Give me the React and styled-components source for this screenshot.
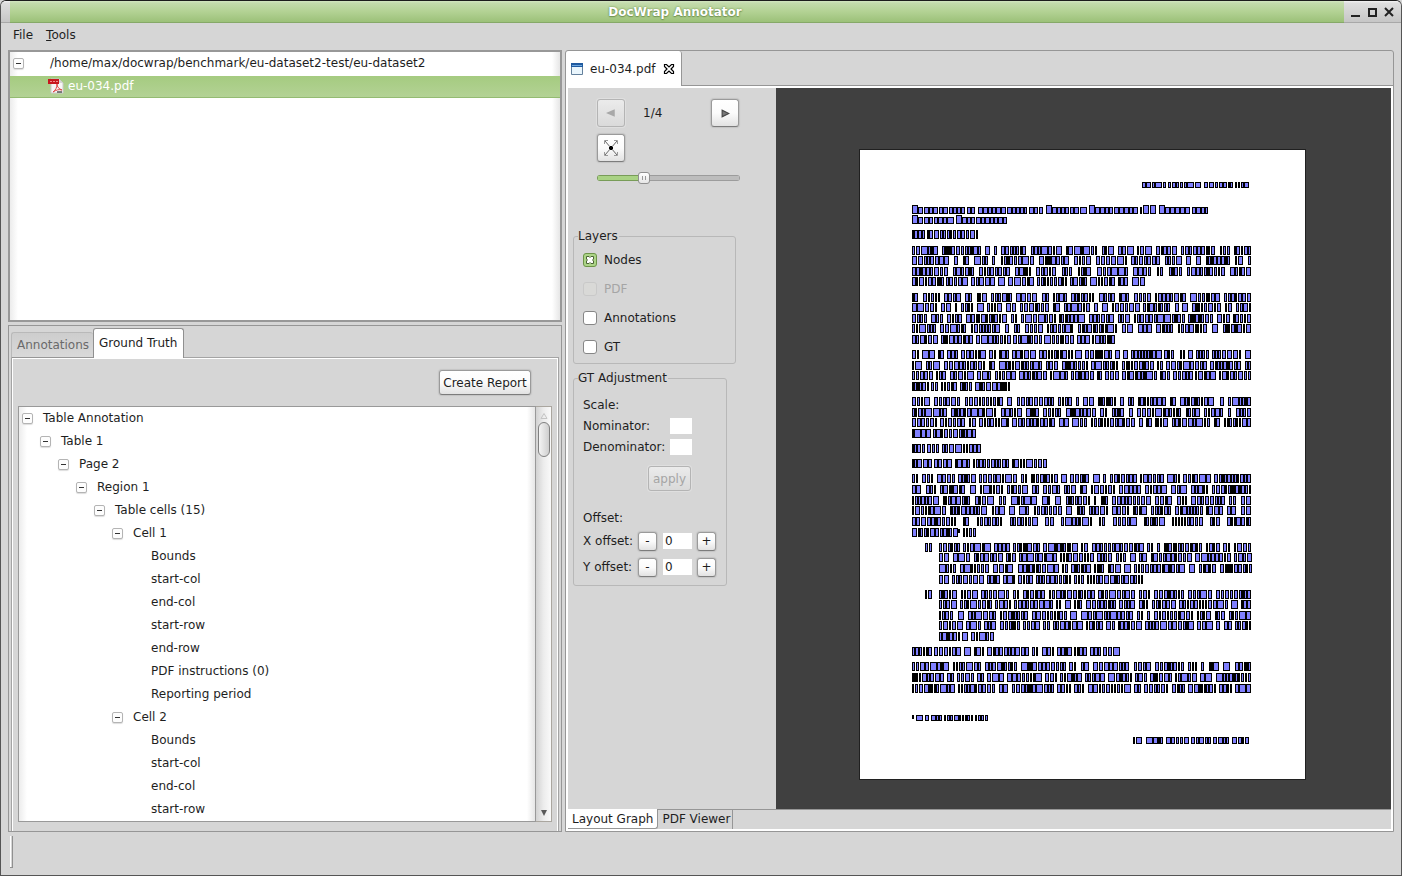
import React, { useState } from "react";
import styled, { createGlobalStyle, css } from "styled-components";

const GlobalStyle = createGlobalStyle`
  * { box-sizing: border-box; }
  body { margin: 0; background: #d6d6d6; }
  body, button, input {
    font-family: "DejaVu Sans", Verdana, sans-serif;
    font-size: 12px;
    color: #1e1e1e;
  }
  button { padding: 0; }
`;

const Window = styled.div`
  display: flex;
  flex-direction: column;
  height: 100vh;
  min-height: 700px;
  border: 1px solid #555;
  border-top-color: #1c1c1c;
  border-radius: 6px 6px 0 0;
  background: #d6d6d6;
`;

const TitleBar = styled.header`
  display: flex;
  height: 22px;
  flex: none;
  padding-left: 9px;
  border-radius: 5px 5px 0 0;
  border-bottom: 1px solid #a8a8a8;
  background: linear-gradient(#f4f4f4, #dedede 10%, #c6c6c6);
`;

const Title = styled.h1`
  flex: 1;
  margin: 0 0 -1px;
  padding-right: 4px;
  border-bottom: 1px solid #86a968;
  background: linear-gradient(#d3e6c1, #c3dbac 10%, #b3d294 50%, #9cc179);
  color: #fff;
  font-size: 12px;
  line-height: 22px;
  text-align: center;
  text-shadow: 0 0 2px #5c7d3d, 0 1px 1px #7c9d5d;
`;

const WindowButtons = styled.div`
  display: flex;
  align-items: center;
  gap: 5px;
  width: 57px;
  padding-left: 5px;
`;

const WindowButton = styled.button`
  display: flex;
  width: 12px;
  height: 14px;
  border: 0;
  background: none;
`;

const MenuBar = styled.nav`
  display: flex;
  flex: none;
  gap: 13px;
  height: 27px;
  padding: 0 12px;
`;

const MenuButton = styled.button`
  border: 0;
  background: none;
  line-height: 22px;
  padding-bottom: 4px;
`;

const Main = styled.main`
  display: grid;
  flex: 1;
  grid-template-columns: minmax(0, 554fr) minmax(0, 829fr);
  gap: 3px;
  min-height: 0;
  padding: 0 7px;
`;

const LeftColumn = styled.div`
  display: flex;
  flex-direction: column;
  gap: 3px;
  min-height: 0;
`;

const edgeShade = css`
  background: linear-gradient(90deg, #ececec, #fff 8px, #fff calc(100% - 8px), #e6e6e6);
`;

const FileTree = styled.ul`
  flex: 268 1 0;
  margin: 0;
  padding: 0;
  overflow: hidden;
  list-style: none;
  border: 2px solid #989898;
  ${edgeShade}
`;

const FileRow = styled.li`
  display: flex;
  align-items: center;
  height: 23px;
  padding: 0 0 1px ${(p) => (p.$selected ? 38 : 3)}px;
  gap: ${(p) => (p.$selected ? 4 : 26)}px;
  white-space: nowrap;
  ${(p) =>
    p.$selected &&
    css`
      height: 22px;
      margin-top: 1px;
      color: #fff;
      border-bottom: 1px solid #94bb72;
      background: linear-gradient(#a5cb80, #b3d295);
    `}
`;

const Expander = styled.button`
  display: flex;
  align-items: center;
  justify-content: center;
  flex: none;
  width: 11px;
  height: 11px;
  border: 1px solid #b4b4b4;
  border-radius: 2px;
  background: #fdfdfd;
  box-shadow: 0 1px 1px #ddd;
  &::before {
    content: "";
    width: 5px;
    height: 1px;
    background: #333;
  }
`;

const LowerPanel = styled.section`
  display: flex;
  flex-direction: column;
  flex: 503 1 0;
  min-height: 0;
  padding: 2px 2px 0;
  border: 1px solid #969696;
`;

const LowerTabs = styled.div`
  display: flex;
  align-items: flex-end;
  flex: none;
  height: 30px;
  position: relative;
  z-index: 1;
  margin-bottom: -1px;
`;

const LowerTab = styled.button`
  height: ${(p) => (p.$active ? 30 : 26)}px;
  padding: ${(p) => (p.$active ? "0 6px 2px 5px" : "0 4px 0 5px")};
  border: 1px solid ${(p) => (p.$active ? "#909090" : "#b9b9b9")};
  border-right-width: ${(p) => (p.$active ? 1 : 0)}px;
  border-bottom: ${(p) => (p.$active ? "0" : "1px solid #969696")};
  border-radius: 3px 3px 0 0;
  background: ${(p) => (p.$active ? "#fff" : "linear-gradient(#cdcdcd, #d9d9d9)")};
  color: ${(p) => (p.$active ? "#1e1e1e" : "#6a6a6a")};
`;

const LowerContent = styled.div`
  display: flex;
  flex-direction: column;
  flex: 1;
  min-height: 0;
  padding: 11px 6px 9px;
  border: 1px solid #a4a4a4;
  border-bottom: 0;
  box-shadow: inset 1px 1px 0 #fff, inset -1px 0 0 #fff;
`;

const Actions = styled.div`
  display: flex;
  flex: none;
  justify-content: flex-end;
  padding: 1px 21px 11px 0;
`;

const Button = styled.button`
  display: flex;
  align-items: center;
  justify-content: center;
  flex: none;
  width: ${(p) => p.$w}px;
  height: ${(p) => p.$h}px;
  border: 1px solid #9a9a9a;
  border-bottom-color: #7c7c7c;
  border-radius: 3px;
  background: linear-gradient(#fff, #fbfbfb 50%, #e2e2e2);
  box-shadow: 0 0 1px 1px #c4c4c4;
  white-space: nowrap;
  &:disabled {
    color: #a5a5a5;
    border-color: #b4b4b4;
    background: linear-gradient(#ebebeb, #dadada);
    box-shadow: 0 0 0 1px #dfdfdf;
  }
`;

const TreeFrame = styled.div`
  display: flex;
  flex: 1;
  min-height: 0;
`;

const AnnotationTree = styled.ul`
  flex: 1;
  min-width: 0;
  margin: 0;
  padding: 0;
  overflow: hidden;
  list-style: none;
  border: 1px solid #999;
  ${edgeShade}
`;

const TreeRow = styled.li`
  display: flex;
  align-items: center;
  gap: 10px;
  height: 23px;
  padding: 0 0 1px ${(p) => 3 + p.$level * 18 + (p.$leaf ? 3 : 0)}px;
  white-space: nowrap;
`;

const ScrollBar = styled.div`
  display: flex;
  flex-direction: column;
  align-items: center;
  width: 16px;
  padding: 5px 1px 4px;
  border: 1px solid #aaa69f;
  border-left: 0;
  background: linear-gradient(90deg, #d2d2d2, #ececec 50%, #fafafa);
`;

const ScrollThumb = styled.div`
  width: 12px;
  height: 35px;
  margin: 2px 0 auto;
  border: 1px solid #808080;
  border-radius: 6px;
  background: linear-gradient(90deg, #f4f4f4, #cecece);
`;

const Editor = styled.section`
  display: flex;
  flex-direction: column;
  min-height: 0;
  border: 1px solid #969696;
  border-radius: 3px 3px 0 0;
`;

const EditorTabs = styled.div`
  display: flex;
  flex: none;
  height: 35px;
  border-bottom: 1px solid #969696;
`;

const EditorTab = styled.div`
  display: flex;
  align-items: center;
  gap: 7px;
  margin-bottom: -1px;
  padding: 0 6px 0 5px;
  border-right: 1px solid #969696;
  border-radius: 3px 3px 0 0;
  background: #fff;
`;

const BareButton = styled.button`
  display: flex;
  border: 0;
  background: none;
`;

const EditorBody = styled.div`
  display: flex;
  flex-direction: column;
  flex: 1;
  min-height: 0;
  border: 2px solid #fff;
`;

const Workspace = styled.div`
  display: flex;
  flex: 1;
  min-height: 0;
`;

const Controls = styled.aside`
  flex: none;
  width: 208px;
  padding: 11px 0 0 5px;
`;

const PageControls = styled.div`
  display: flex;
  flex-direction: column;
  gap: 7px;
  width: 166px;
  height: 130px;
  padding-left: 24px;
`;

const PageNav = styled.div`
  display: flex;
  align-items: center;
`;

const PageCount = styled.output`
  flex: 1;
  padding-left: 18px;
`;

const ZoomSlider = styled.input`
  appearance: none;
  width: 143px;
  height: 12px;
  margin: 3px 0 0;
  background: none;
  &::-webkit-slider-runnable-track {
    height: 6px;
    border-radius: 3px;
    background:
      linear-gradient(90deg, #a9d284 32%, #bdbdbd 32%) 1px 1px / 141px 4px no-repeat,
      linear-gradient(90deg, #789c58 32%, #9c9c9c 32%);
  }
  &::-webkit-slider-thumb {
    appearance: none;
    width: 12px;
    height: 12px;
    margin-top: -3px;
    border: 1px solid #909090;
    border-radius: 3px;
    background:
      linear-gradient(#999, #999) 3px 3px / 1px 4px no-repeat,
      linear-gradient(#999, #999) 6px 3px / 1px 4px no-repeat,
      linear-gradient(#fff, #e6e6e6);
  }
`;

const Group = styled.fieldset`
  width: ${(p) => p.$w}px;
  margin: 0 0 7px;
  padding: 2px 9px ${(p) => p.$bottom}px;
  border: 1px solid #b8b8b8;
  border-radius: 3px;
`;

const Legend = styled.legend`
  margin-left: -5px;
  padding: 0 1px 0 0;
  line-height: 14px;
`;

const CheckRow = styled.label`
  display: flex;
  align-items: center;
  gap: 7px;
  height: 29px;
  color: ${(p) => (p.$disabled ? "#a5a5a5" : "#1e1e1e")};
`;

const CheckHolder = styled.span`
  position: relative;
  display: flex;
`;

const CheckInput = styled.input`
  appearance: none;
  width: 14px;
  height: 14px;
  margin: 0;
  border: 1px solid #868686;
  border-radius: 3px;
  background: #fff;
  &:checked {
    border-color: #6d9448;
    background: #acd487;
  }
  &:disabled {
    border-color: #c9c9c9;
    background: #d9d9d7;
  }
`;

const CheckMark = styled.svg`
  position: absolute;
  inset: 0;
  pointer-events: none;
`;

const GroupCaption = styled.div`
  line-height: 20px;
  margin-top: ${(p) => p.$top}px;
`;

const ScaleRow = styled.div`
  display: flex;
  align-items: center;
  justify-content: space-between;
  width: 109px;
  height: 21px;
`;

const OffsetRow = styled.div`
  display: grid;
  grid-template-columns: 50px 20px 29px 20px;
  column-gap: 5px;
  align-items: center;
  height: 26px;
  & > label { white-space: nowrap; }
`;

const TextField = styled.input`
  width: ${(p) => p.$w}px;
  height: 16px;
  padding: 0 2px;
  border: 0;
  background: #fff;
`;

const ApplyRow = styled.div`
  display: flex;
  justify-content: flex-end;
  width: 109px;
  padding: 9px 1px 0 0;
`;

const Canvas = styled.div`
  display: flex;
  flex: 1;
  justify-content: center;
  align-items: flex-start;
  min-width: 0;
  overflow: hidden;
  padding: 61px 2px 0 0;
  background: #404040;
`;

const Page = styled.svg`
  flex: none;
  box-sizing: content-box;
  border: 1px solid #202020;
  background: #fff;
`;

const BottomTabs = styled.div`
  display: flex;
  flex: none;
  height: 20px;
  border-top: 1px solid #969696;
`;

const BottomTab = styled.button`
  margin-top: ${(p) => (p.$active ? -1 : 0)}px;
  padding: ${(p) => (p.$active ? "0 4px 0 4px" : "0 2px 1px 4px")};
  border: 0;
  border-right: 1px solid #969696;
  border-bottom: ${(p) => (p.$active ? "1px solid #969696" : "0")};
  border-radius: 0 0 ${(p) => (p.$active ? 3 : 0)}px 0;
  background: ${(p) => (p.$active ? "#fff" : "none")};
`;

const StatusBar = styled.footer`
  flex: none;
  height: 43px;
  padding: 4px 9px;
`;

const Grip = styled.div`
  width: 3px;
  height: 32px;
  border: solid #909090;
  border-width: 0 1px 1px 0;
  box-shadow: inset 1px 0 0 #fff;
`;

const annotationRows = [
  [0, "Table Annotation"],
  [1, "Table 1"],
  [2, "Page 2"],
  [3, "Region 1"],
  [4, "Table cells (15)"],
  [5, "Cell 1"],
  [7, "Bounds"],
  [7, "start-col"],
  [7, "end-col"],
  [7, "start-row"],
  [7, "end-row"],
  [7, "PDF instructions (0)"],
  [7, "Reporting period"],
  [5, "Cell 2"],
  [7, "Bounds"],
  [7, "start-col"],
  [7, "end-col"],
  [7, "start-row"],
];

/* Text lines of the document: top, height and word extents, in thirds of a pixel. */
const pageLines = [
  [126, 18, "876-948 954-1053 1062-1092 1095-1149 1155-1161 1164-1197"],
  [201, 21, "C186-345 351-375 384-531 537-579 C588-711 C717-864 870-876 C879-897 C900-921 C927-1020 1026-1074"],
  [231, 21, "C186-312 C318-471"],
  [270, 27, "186-225 231-384"],
  [318, 27, "186-264 276-393 405-420 432-441 453-528 543-636 648-741 756-792 804-852 861-906 918-981 993-1095 1110-1140 1152-1203"],
  [348, 27, "186-297 312-324 339-357 372-414 426-435 453-552 567-657 672-723 738-831 843-930 945-996 1008-1023 1038-1053 1068-1140 1155-1179 1194-1203"],
  [381, 27, "186-294 309-372 387-480 495-543 558-618 636-666 684-723 741-834 849-903 921-939 957-996 1011-1125 1140-1203"],
  [411, 27, "186-282 288-354 363-435 444-465 474-552 561-651 660-711 720-795 804-834 846-885"],
  [459, 27, "186-204 219-270 282-333 345-366 381-411 423-486 498-561 576-597 609-651 663-732 747-795 807-837 852-903 915-1008 1020-1110 1122-1203"],
  [489, 27, "186-261 273-303 315-321 333-369 381-402 411-456 468-498 510-597 609-630 642-720 732-744 756-774 786-870 879-960 975-987 996-1014 1026-1113 1125-1146 1158-1203"],
  [522, 27, "186-231 243-279 291-336 348-471 483-501 513-618 627-705 717-792 804-840 852-1005 1014-1089 1101-1140 1149-1203"],
  [552, 27, "186-258 270-348 363-450 465-477 492-510 525-579 591-669 684-801 816-849 864-906 918-969 984-1071 1086-1104 1119-1203"],
  [585, 27, "186-264 273-369 378-483 489-576 582-672 681-720 726-795"],
  [630, 27, "186-207 216-255 264-282 291-324 333-408 417-438 447-477 486-558 567-669 675-696 705-786 795-810 819-834 843-936 942-972 990-1005 1014-1029 1038-1077 1086-1173 1185-1203"],
  [663, 27, "186-216 228-270 282-405 417-435 447-576 588-624 636-714 723-804 816-912 921-939 948-1071 1080-1173 1185-1203"],
  [693, 27, "186-249 258-288 300-372 381-423 435-498 507-591 600-654 663-732 741-756 765-807 816-921 930-960 969-1029 1035-1098 1107-1203"],
  [726, 27, "186-237 243-264 273-321 330-366 375-480"],
  [771, 27, "186-240 252-330 345-459 471-486 501-612 624-666 678-687 699-732 744-798 810-822 834-852 864-948 960-978 990-1098 1110-1122 1134-1203"],
  [804, 27, "186-291 303-438 453-516 528-567 579-633 648-738 750-771 786-822 837-849 861-993 1008-1050 1062-1119 1134-1143 1158-1203"],
  [834, 27, "186-261 270-345 357-378 387-477 486-615 627-657 666-711 723-855 867-879 888-906 915-954 966-1080 1092-1110 1122-1203"],
  [867, 27, "186-243 249-378"],
  [912, 27, "186-225 231-267 276-393"],
  [957, 27, "186-246 252-306 315-360 369-477 486-591"],
  [1002, 27, "186-204 216-249 261-315 324-378 387-501 513-531 543-624 633-651 660-717 729-750 759-768 780-861 870-942 951-990 999-1083 1092-1203"],
  [1035, 27, "186-213 228-258 270-345 360-378 390-459 471-534 546-567 579-630 642-678 690-711 723-795 807-873 885-951 963-1011 1023-1074 1086-1203"],
  [1068, 27, "186-267 279-360 375-432 447-468 483-561 576-600 615-633 648-720 732-738 753-774 786-903 915-966 981-1011 1023-1125 1137-1158 1173-1203"],
  [1098, 27, "186-288 300-411 426-465 477-495 507-537 552-636 648-666 681-705 717-774 786-837 849-891 903-963 975-1059 1068-1119 1131-1158 1173-1203"],
  [1131, 27, "186-318 339-357 381-456 480-564 585-612 633-726 747-765 789-861 882-945 966-1059 1080-1110 1131-1203"],
  [1164, 27, "186-324 339-378"],
  [1167, 12, "324-330"],
  [1209, 27, "225-246 267-330 339-423 432-480 489-570 579-684 693-714 726-882 891-909 921-930 942-1056 1068-1110 1119-1140 1152-1203"],
  [1239, 27, "267-297 309-360 372-459 468-498 507-621 630-732 741-786 798-828 840-858 867-891 903-1026 1035-1143 1152-1206"],
  [1272, 27, "267-318 330-417 429-495 504-627 636-654 663-723 732-762 774-813 822-843 852-1005 1017-1035 1047-1098 1110-1206"],
  [1305, 27, "267-297 306-402 411-450 459-495 504-549 558-663 672-702 711-879"],
  [1350, 27, "225-246 267-321 333-384 393-477 489-507 519-585 597-735 744-855 867-900 912-1002 1014-1086 1098-1203"],
  [1380, 27, "267-321 330-426 435-483 492-609 618-633 645-663 672-696 708-798 807-855 867-894 906-978 987-1134 1143-1164 1173-1203"],
  [1413, 27, "267-309 324-342 354-438 450-534 546-651 660-681 693-849 861-879 891-900 912-1029 1041-1083 1095-1125 1137-1203"],
  [1443, 27, "267-339 348-393 402-438 450-510 519-570 579-600 609-699 708-759 768-795 804-876 885-1032 1041-1089 1098-1110 1122-1146 1155-1203"],
  [1476, 27, "267-330 336-354 363-432"],
  [1521, 27, "186-246 252-333 342-363 372-402 411-537 546-564 576-612 621-666 672-711 720-753 759-810"],
  [1566, 27, "186-297 309-393 405-501 513-648 657-678 693-717 729-837 852-903 915-1002 1014-1041 1053-1062 1077-1107 1119-1140 1155-1203"],
  [1599, 27, "186-282 291-312 321-372 381-402 411-462 471-576 585-621 630-696 705-765 774-846 855-891 900-966 975-1041 1050-1086 1098-1203"],
  [1632, 27, "186-315 324-435 447-474 486-612 621-663 672-702 714-843 852-873 882-954 966-1005 1014-1098 1107-1146 1155-1203"],
  [1725, 12, "186-192"],
  [1725, 18, "198-219 225-237 243-276 282-369 375-414"],
  [1791, 21, "849-882 888-939 948-1017 1023-1083 1089-1137 1146-1197"],
];

const bodyWidths = [4, 3, 2, 4, 5, 3, 2, 4, 3, 4, 2, 3, 7, 3, 4, 2, 5];
const titleWidths = [5, 4, 5, 5, 4, 5];

function buildNodes() {
  let outline = "";
  let fill = "";
  let seed = 7;
  const next = (n) => {
    seed = (seed * 1103515245 + 12345) % 2147483648;
    return Math.floor(seed / 65536) % n;
  };
  const box = (x, y, w, h) => {
    outline += `M${x} ${y}h${w}v${h}h${-w}z`;
    if (w > 2 && h > 4) fill += `M${x + 1} ${y + 1}h${w - 2}v${h - 2}h${2 - w}z`;
  };
  pageLines.forEach(([top, height, words]) => {
    const y = top / 3 - 10;
    const h = height / 3;
    const title = top === 201 || top === 231;
    const widths = title ? titleWidths : bodyWidths;
    words.split(" ").forEach((word) => {
      const capital = word[0] === "C";
      const [a, b] = word.replace("C", "").split("-");
      let x = a / 3 - 10;
      const end = b / 3 - 10;
      if (capital) {
        const w = Math.min(6, end - x);
        box(x, y - 2, w, h + 2);
        x += w;
      }
      while (end - x >= 2) {
        let w = Math.min(widths[next(widths.length)], end - x);
        if (end - x - w < 3) w = end - x > 7 ? w - 1 : end - x;
        w = Math.max(2, w);
        box(x, y, w, h);
        x += w + (next(title ? 4 : 2) > (title ? 2 : 0) ? 1 : 0);
      }
    });
  });
  return { outline, fill };
}

const nodes = buildNodes();

const PdfIcon = () => (
  <svg width="16" height="16" viewBox="0 0 16 16" aria-hidden="true">
    <path d="M3 1h8l4 4v10H3z" fill="#f6f6f6" stroke="#c9c9c9" />
    <path d="M11 1v4h4z" fill="#d5d5d5" />
    <path d="M0 1h11v5H0z" fill="#c8171e" />
    <path d="M2 3.500h2m1 0h2m1 0h2" stroke="#f08a8a" />
    <path d="M5 14c3-2 4-5 4-8 0 3 2 5 5 6-3-1-6 0-9 2z" fill="none" stroke="#df4545" />
    <path d="M9 14h5" stroke="#555" strokeWidth="1.500" />
  </svg>
);

const WindowIcon = () => (
  <svg width="12" height="12" viewBox="0 0 12 12" aria-hidden="true">
    <path d="M.5.5h11v11H.5z" fill="#eaf6fd" stroke="#64809c" />
    <path d="M0 0h12v4H0z" fill="#205a9f" />
    <path d="M1 2.500h10" stroke="#6fa8df" />
  </svg>
);

const CloseIcon = () => (
  <svg width="12" height="12" viewBox="0 0 12 12" aria-hidden="true">
    <path d="M1.500 1.500h2L6 4l2.500-2.500h2v2L8 6l2.500 2.500v2h-2L6 8l-2.500 2.500h-2v-2L4 6 1.500 3.500z" fill="#fff" stroke="#000" strokeWidth="1.200" />
  </svg>
);

const FitIcon = () => (
  <svg width="18" height="18" viewBox="0 0 18 18" aria-hidden="true">
    <path d="M3 2l12 14M15 2L3 16" stroke="#666" />
    <path d="M2.500 5V1.500H6M12 1.500h3.500V5M15.500 13v3.500H12M6 16.500H2.500V13" fill="none" stroke="#999" />
    <path d="M8 7h2v1h1v2h-1v1H8v-1H7V8h1z" fill="#000" />
  </svg>
);

const Triangle = ({ d, fill, stroke = "none", size = 8 }) => (
  <svg width={size} height={size} viewBox="0 0 8 8" aria-hidden="true">
    <path d={d} fill={fill} stroke={stroke} />
  </svg>
);

function CheckOption({ label, disabled, initial = false }) {
  const [checked, setChecked] = useState(initial);
  return (
    <CheckRow $disabled={disabled}>
      <CheckHolder>
        <CheckInput
          type="checkbox"
          disabled={disabled}
          checked={checked}
          onChange={() => setChecked(!checked)}
        />
        {checked && (
          <CheckMark width="14" height="14" viewBox="0 0 14 14">
            <path d="M3.500 3.500h2.500l1 1 1-1h2.500v2.500l-1 1 1 1v2.500H8l-1-1-1 1H3.500V8l1-1-1-1z" fill="#fff" stroke="#4b6236" />
          </CheckMark>
        )}
      </CheckHolder>
      {label}
    </CheckRow>
  );
}

function OffsetControl({ axis }) {
  const [value, setValue] = useState(0);
  const id = `offset-${axis}`;
  return (
    <OffsetRow>
      <label htmlFor={id}>{axis} offset:</label>
      <Button $w={19} $h={19} onClick={() => setValue(Number(value) - 1)}>-</Button>
      <TextField id={id} $w={29} value={value} onChange={(e) => setValue(e.target.value)} />
      <Button $w={19} $h={19} onClick={() => setValue(Number(value) + 1)}>+</Button>
    </OffsetRow>
  );
}

export default function App() {
  return (
    <>
      <GlobalStyle />
      <Window>
        <TitleBar>
          <Title>DocWrap Annotator</Title>
          <WindowButtons>
            <WindowButton aria-label="Minimize">
              <svg width="12" height="14" viewBox="0 0 12 14"><path d="M2 11h9" stroke="#222" strokeWidth="2" /></svg>
            </WindowButton>
            <WindowButton aria-label="Maximize">
              <svg width="12" height="14" viewBox="0 0 12 14"><path d="M3 4h7v7H3z" fill="none" stroke="#222" strokeWidth="2" /></svg>
            </WindowButton>
            <WindowButton aria-label="Close">
              <svg width="12" height="14" viewBox="0 0 12 14"><path d="M2 3l8 8M10 3l-8 8" stroke="#222" strokeWidth="2" /></svg>
            </WindowButton>
          </WindowButtons>
        </TitleBar>

        <MenuBar>
          <MenuButton>File</MenuButton>
          <MenuButton><u>T</u>ools</MenuButton>
        </MenuBar>

        <Main>
          <LeftColumn>
            <FileTree>
              <FileRow>
                <Expander aria-label="Collapse folder" />
                /home/max/docwrap/benchmark/eu-dataset2-test/eu-dataset2
              </FileRow>
              <FileRow $selected>
                <PdfIcon />
                eu-034.pdf
              </FileRow>
            </FileTree>

            <LowerPanel>
              <LowerTabs>
                <LowerTab>Annotations</LowerTab>
                <LowerTab $active>Ground Truth</LowerTab>
              </LowerTabs>
              <LowerContent>
                <Actions>
                  <Button $w={92} $h={25}>Create Report</Button>
                </Actions>
                <TreeFrame>
                  <AnnotationTree>
                    {annotationRows.map(([level, name], i) => (
                      <TreeRow key={i} $level={level} $leaf={level === 7}>
                        {level < 7 && <Expander aria-label={`Collapse ${name}`} />}
                        {name}
                      </TreeRow>
                    ))}
                  </AnnotationTree>
                  <ScrollBar>
                    <Triangle d="M1 6.500h6l-3-5z" fill="none" stroke="#c4c4c4" />
                    <ScrollThumb />
                    <Triangle d="M1 1h6l-3 6z" fill="#5a5a5a" />
                  </ScrollBar>
                </TreeFrame>
              </LowerContent>
            </LowerPanel>
          </LeftColumn>

          <Editor>
            <EditorTabs>
              <EditorTab>
                <WindowIcon />
                <span>eu-034.pdf</span>
                <BareButton aria-label="Close tab"><CloseIcon /></BareButton>
              </EditorTab>
            </EditorTabs>
            <EditorBody>
              <Workspace>
                <Controls>
                  <PageControls>
                    <PageNav>
                      <Button $w={28} $h={28} disabled aria-label="Previous page">
                        <Triangle d="M7 1v6L0 4z" fill="#a8a8a8" size={10} />
                      </Button>
                      <PageCount>1/4</PageCount>
                      <Button $w={28} $h={28} aria-label="Next page">
                        <Triangle d="M1 1v6l6-3z" fill="#777" stroke="#444" size={9} />
                      </Button>
                    </PageNav>
                    <Button $w={28} $h={28} aria-label="Fit page"><FitIcon /></Button>
                    <ZoomSlider type="range" min="0" max="100" defaultValue="31" aria-label="Zoom" />
                  </PageControls>

                  <Group $w={163} $bottom={2}>
                    <Legend>Layers</Legend>
                    <CheckOption label="Nodes" initial />
                    <CheckOption label="PDF" disabled />
                    <CheckOption label="Annotations" />
                    <CheckOption label="GT" />
                  </Group>

                  <Group $w={154} $bottom={5}>
                    <Legend>GT Adjustment</Legend>
                    <GroupCaption $top={8}>Scale:</GroupCaption>
                    <ScaleRow>
                      <label htmlFor="nominator">Nominator:</label>
                      <TextField id="nominator" $w={22} />
                    </ScaleRow>
                    <ScaleRow>
                      <label htmlFor="denominator">Denominator:</label>
                      <TextField id="denominator" $w={22} />
                    </ScaleRow>
                    <ApplyRow>
                      <Button $w={43} $h={25} disabled>apply</Button>
                    </ApplyRow>
                    <GroupCaption $top={17}>Offset:</GroupCaption>
                    <OffsetControl axis="X" />
                    <OffsetControl axis="Y" />
                  </Group>
                </Controls>
                <Canvas>
                  <Page width="445" height="629" viewBox="0 0 445 629" shapeRendering="crispEdges" role="img" aria-label="Layout graph of page 1">
                    <path d={nodes.outline} fill="#000" />
                    <path d={nodes.fill} fill="#8080ff" />
                  </Page>
                </Canvas>
              </Workspace>
              <BottomTabs>
                <BottomTab $active>Layout Graph</BottomTab>
                <BottomTab>PDF Viewer</BottomTab>
              </BottomTabs>
            </EditorBody>
          </Editor>
        </Main>

        <StatusBar>
          <Grip />
        </StatusBar>
      </Window>
    </>
  );
}
